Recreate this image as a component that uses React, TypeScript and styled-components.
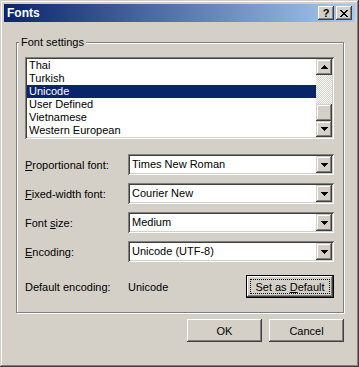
import React from 'react';
import styled, { createGlobalStyle, css } from 'styled-components';

const GlobalStyle = createGlobalStyle`
  html, body {
    margin: 0;
    padding: 0;
    background: #d4d0c8;
  }
  body {
    font-family: 'Liberation Sans', Arial, sans-serif;
    font-size: 11px;
    color: #000;
  }
  * {
    box-sizing: border-box;
  }
`;

const raised = css`
  background: #d4d0c8;
  box-shadow: inset -1px -1px #404040, inset 1px 1px #ffffff,
    inset -2px -2px #808080, inset 2px 2px #d4d0c8;
`;

const arrowRaised = css`
  background: #d4d0c8;
  box-shadow: inset -1px -1px #404040, inset 1px 1px #d4d0c8,
    inset -2px -2px #808080, inset 2px 2px #ffffff;
`;

const sunken = css`
  background: #ffffff;
  box-shadow: inset 1px 1px #808080, inset -1px -1px #ffffff,
    inset 2px 2px #404040, inset -2px -2px #d4d0c8;
`;

const Window = styled.div`
  width: 359px;
  height: 367px;
  padding: 4px;
  display: flex;
  flex-direction: column;
  background: #d4d0c8;
  box-shadow: inset -1px -1px #404040, inset 1px 1px #d4d0c8,
    inset -2px -2px #808080, inset 2px 2px #ffffff;
`;

const TitleBar = styled.div`
  height: 18px;
  display: flex;
  align-items: center;
  padding: 0 3px 0 3px;
  background: linear-gradient(to right, #0a246a, #a6caf0);
`;

const Title = styled.span`
  flex: 1;
  color: #fff;
  font-weight: bold;
  font-size: 12px;
`;

const CaptionButton = styled.div`
  width: 16px;
  height: 14px;
  ${raised};
  display: flex;
  align-items: center;
  justify-content: center;
  font-weight: bold;
  font-size: 11px;
  line-height: 14px;
  & + & {
    margin-left: 2px;
  }
`;

const Body = styled.div`
  flex: 1;
  display: flex;
  flex-direction: column;
  padding: 14px 11px 0 12px;
`;

const GroupBox = styled.fieldset`
  margin: 0;
  padding: 0;
  min-width: 0;
  border: 1px solid #808080;
  box-shadow: inset 1px 1px #ffffff, 1px 1px #ffffff;
`;

const GroupTitle = styled.legend`
  margin-left: 2px;
  padding: 0 2px;
  line-height: 13px;
  background: #d4d0c8;
`;

const GroupContent = styled.div`
  display: flex;
  flex-direction: column;
  padding: 8px 9px 14px 8px;
`;

const ListBox = styled.div`
  ${sunken};
  height: 82px;
  padding: 2px;
  display: flex;
  margin-bottom: 15px;
`;

const ListItems = styled.div`
  flex: 1;
  display: flex;
  flex-direction: column;
`;

const ListItem = styled.div<{ $selected?: boolean }>`
  height: 13px;
  line-height: 13px;
  padding-left: 2px;
  background: ${(p) => (p.$selected ? '#0a246a' : 'transparent')};
  color: ${(p) => (p.$selected ? '#ffffff' : '#000000')};
  white-space: nowrap;
`;

const ScrollBar = styled.div`
  width: 16px;
  display: flex;
  flex-direction: column;
`;

const ArrowButton = styled.div<{ $height?: number }>`
  ${arrowRaised};
  height: ${(p) => p.$height ?? 16}px;
  display: flex;
  align-items: center;
  justify-content: center;
`;

const Track = styled.div`
  flex: 1;
  background-image: conic-gradient(
    #ffffff 25%,
    #d4d0c8 0 50%,
    #ffffff 0 75%,
    #d4d0c8 0
  );
  background-size: 2px 2px;
`;

const FieldGrid = styled.div`
  display: grid;
  grid-template-columns: 103px 1fr;
  grid-auto-rows: 21px;
  row-gap: 8px;
  align-items: center;
`;

const Label = styled.span`
  white-space: nowrap;
`;

const Key = styled.span`
  text-decoration: underline;
  text-underline-offset: 1px;
`;

const Combo = styled.div`
  ${sunken};
  height: 21px;
  padding: 2px;
  display: flex;
`;

const ComboText = styled.div`
  flex: 1;
  line-height: 17px;
  padding-left: 2px;
`;

const DropButton = styled.div`
  ${arrowRaised};
  width: 16px;
  height: 17px;
  display: flex;
  align-items: center;
  justify-content: center;
`;

const DefaultRow = styled.div`
  display: grid;
  grid-template-columns: 103px 1fr auto;
  align-items: center;
  height: 23px;
  margin-top: 13px;
`;

const PushButton = styled.div<{ $width?: number; $default?: boolean }>`
  position: relative;
  width: ${(p) => p.$width ?? 75}px;
  height: 23px;
  display: flex;
  align-items: center;
  justify-content: center;
  ${raised};
  ${(p) =>
    p.$default &&
    css`
      border: 1px solid #000;
      box-shadow: inset -1px -1px #404040, inset 1px 1px #ffffff,
        inset -2px -2px #808080, inset 2px 2px #d4d0c8;
    `}
`;

const FocusRing = styled.span`
  position: absolute;
  inset: 3px;
  border: 1px dotted #000;
  pointer-events: none;
`;

const ButtonRow = styled.div`
  display: flex;
  justify-content: flex-end;
  gap: 7px;
  margin-top: 6px;
`;

const UpArrow = () => (
  <svg width="7" height="4" viewBox="0 0 7 4" shapeRendering="crispEdges">
    <path d="M3 0h1v1h1v1h1v1h1v1H0V3h1V2h1V1h1z" fill="#000" />
  </svg>
);

const DownArrow = () => (
  <svg width="7" height="4" viewBox="0 0 7 4" shapeRendering="crispEdges">
    <path d="M0 0h7v1H6v1H5v1H4v1H3V3H2V2H1V1H0z" fill="#000" />
  </svg>
);

const closePixels: [number, number, number][] = [
  [0, 0, 2], [6, 0, 2],
  [1, 1, 2], [5, 1, 2],
  [2, 2, 4],
  [3, 3, 2],
  [2, 4, 4],
  [1, 5, 2], [5, 5, 2],
  [0, 6, 2], [6, 6, 2],
];

const CloseGlyph = () => (
  <svg width="8" height="7" viewBox="0 0 8 7" shapeRendering="crispEdges">
    {closePixels.map(([x, y, w], i) => (
      <rect key={i} x={x} y={y} width={w} height={1} fill="#000" />
    ))}
  </svg>
);

const encodings = [
  'Thai',
  'Turkish',
  'Unicode',
  'User Defined',
  'Vietnamese',
  'Western European',
];

const fields = [
  { pre: '', key: 'P', post: 'roportional font:', value: 'Times New Roman' },
  { pre: '', key: 'F', post: 'ixed-width font:', value: 'Courier New' },
  { pre: 'Font ', key: 's', post: 'ize:', value: 'Medium' },
  { pre: '', key: 'E', post: 'ncoding:', value: 'Unicode (UTF-8)' },
];

const App = () => {
  return (
    <>
      <GlobalStyle />
      <Window>
        <TitleBar>
          <Title>Fonts</Title>
          <CaptionButton>?</CaptionButton>
          <CaptionButton>
            <CloseGlyph />
          </CaptionButton>
        </TitleBar>
        <Body>
          <GroupBox>
            <GroupTitle>Font settings</GroupTitle>
            <GroupContent>
              <ListBox>
                <ListItems>
                  {encodings.map((e) => (
                    <ListItem key={e} $selected={e === 'Unicode'}>
                      {e}
                    </ListItem>
                  ))}
                </ListItems>
                <ScrollBar>
                  <ArrowButton>
                    <UpArrow />
                  </ArrowButton>
                  <Track />
                  <ArrowButton $height={17} />
                  <ArrowButton>
                    <DownArrow />
                  </ArrowButton>
                </ScrollBar>
              </ListBox>
              <FieldGrid>
                {fields.map((f) => (
                  <React.Fragment key={f.value}>
                    <Label>
                      {f.pre}
                      <Key>{f.key}</Key>
                      {f.post}
                    </Label>
                    <Combo>
                      <ComboText>{f.value}</ComboText>
                      <DropButton>
                        <DownArrow />
                      </DropButton>
                    </Combo>
                  </React.Fragment>
                ))}
              </FieldGrid>
              <DefaultRow>
                <Label>Default encoding:</Label>
                <Label>Unicode</Label>
                <PushButton $width={88} $default>
                  <FocusRing />
                  <span>
                    Set as <Key>D</Key>efault
                  </span>
                </PushButton>
              </DefaultRow>
            </GroupContent>
          </GroupBox>
          <ButtonRow>
            <PushButton>OK</PushButton>
            <PushButton>Cancel</PushButton>
          </ButtonRow>
        </Body>
      </Window>
    </>
  );
};

export default App;
